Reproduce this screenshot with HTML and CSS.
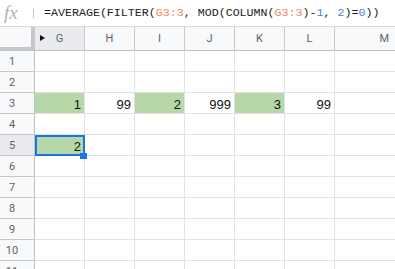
FILE: index.html
```html
<!DOCTYPE html>
<html>
<head>
<meta charset="utf-8">
<link rel="stylesheet" href="styles.css">
</head>
<body>
<div class="fbar">
  <span class="fx">fx</span>
  <span class="sep"></span>
  <span class="formula">=AVERAGE(FILTER(<span class="ref">G3:3</span>, MOD(COLUMN(<span class="ref">G3:3</span>)-<span class="num">1</span>, <span class="num">2</span>)=<span class="num">0</span>))</span>
</div>
<div class="grid">
  <div class="corner"></div>
  <div class="ch sel"><span class="tri"></span>G</div>
  <div class="ch">H</div>
  <div class="ch">I</div>
  <div class="ch">J</div>
  <div class="ch">K</div>
  <div class="ch">L</div>
  <div class="ch last">M</div>

  <div class="rh">1</div><div class="c"></div><div class="c"></div><div class="c"></div><div class="c"></div><div class="c"></div><div class="c"></div><div class="c last"></div>
  <div class="rh">2</div><div class="c"></div><div class="c"></div><div class="c"></div><div class="c"></div><div class="c"></div><div class="c"></div><div class="c last"></div>
  <div class="rh">3</div><div class="c g">1</div><div class="c">99</div><div class="c g">2</div><div class="c">999</div><div class="c g">3</div><div class="c">99</div><div class="c last"></div>
  <div class="rh">4</div><div class="c"></div><div class="c"></div><div class="c"></div><div class="c"></div><div class="c"></div><div class="c"></div><div class="c last"></div>
  <div class="rh sel">5</div><div class="c g active">2</div><div class="c"></div><div class="c"></div><div class="c"></div><div class="c"></div><div class="c"></div><div class="c last"></div>
  <div class="rh">6</div><div class="c"></div><div class="c"></div><div class="c"></div><div class="c"></div><div class="c"></div><div class="c"></div><div class="c last"></div>
  <div class="rh">7</div><div class="c"></div><div class="c"></div><div class="c"></div><div class="c"></div><div class="c"></div><div class="c"></div><div class="c last"></div>
  <div class="rh">8</div><div class="c"></div><div class="c"></div><div class="c"></div><div class="c"></div><div class="c"></div><div class="c"></div><div class="c last"></div>
  <div class="rh">9</div><div class="c"></div><div class="c"></div><div class="c"></div><div class="c"></div><div class="c"></div><div class="c"></div><div class="c last"></div>
  <div class="rh">10</div><div class="c"></div><div class="c"></div><div class="c"></div><div class="c"></div><div class="c"></div><div class="c"></div><div class="c last"></div>
  <div class="rh">11</div><div class="c"></div><div class="c"></div><div class="c"></div><div class="c"></div><div class="c"></div><div class="c"></div><div class="c last"></div>
</div>
</body>
</html>
```
FILE: styles.css
```css
* { box-sizing: border-box; }
html, body { margin: 0; padding: 0; background: #fff; overflow: hidden; }
body { width: 395px; height: 269px; }

.fbar {
  height: 27px;
  border-bottom: 1px solid #dadce0;
  display: flex;
  align-items: center;
  background: #fff;
}
.fx {
  width: 33px;
  padding-left: 4px;
  font-family: "Liberation Serif", serif;
  font-style: italic;
  font-size: 19px;
  color: #b5b5b5;
  line-height: 1;
  margin-top: -2px;
}
.sep {
  width: 1px;
  height: 9px;
  background: #c4c4c4;
  margin-right: 10px;
}
.formula {
  font-family: "Liberation Mono", monospace;
  font-size: 11.65px;
  color: #222;
  white-space: nowrap;
  margin-top: -2px;
}
.ref { color: #f0885e; }
.num { color: #4f7fd6; }

.grid {
  display: grid;
  grid-template-columns: 35px repeat(6, 50px) 1fr;
  grid-auto-rows: 21px;
  grid-template-rows: 24px;
  font-family: "Liberation Sans", Arial, sans-serif;
}
.corner {
  background: #f8f9fa;
  border-right: 4px solid #c4c7c9;
  border-bottom: 4px solid #c4c7c9;
}
.ch {
  position: relative;
  background: #f8f9fa;
  border-right: 1px solid #c8c8c8;
  border-bottom: 1px solid #c0c0c0;
  font-family: Roboto, "Liberation Sans", sans-serif;
  font-size: 11px;
  color: #5f6368;
  display: flex;
  align-items: center;
  justify-content: center;
}
.ch.last { border-right: none; justify-content: flex-end; padding-right: 6px; }
.ch.sel, .rh.sel { background: #e8eaed; }
.tri {
  position: absolute;
  left: 5px;
  top: 8px;
  width: 0;
  height: 0;
  border-top: 3.5px solid transparent;
  border-bottom: 3.5px solid transparent;
  border-left: 5px solid #111;
}
.rh {
  background: #f8f9fa;
  border-right: 1px solid #c0c0c0;
  border-bottom: 1px solid #c8c8c8;
  font-family: Roboto, "Liberation Sans", sans-serif;
  font-size: 11px;
  color: #5f6368;
  display: flex;
  align-items: center;
  justify-content: center;
  padding-right: 10px;
}
.c {
  border-right: 1px solid #e2e2e2;
  border-bottom: 1px solid #e2e2e2;
  font-size: 13px;
  color: #111;
  display: flex;
  align-items: center;
  justify-content: flex-end;
  padding-right: 3px;
  padding-top: 2px;
}
.c.last { border-right: none; }
.c.g { background: #b6d7a8; }
.active { position: relative; }
.active::after {
  content: "";
  position: absolute;
  left: 0; top: 0; right: -1px; bottom: -1px;
  border: 2px solid #1a73e8;
}
.active::before {
  content: "";
  position: absolute;
  left: 45px;
  top: 18px;
  width: 7px;
  height: 6px;
  background: #1a73e8;
  z-index: 2;
}
```
